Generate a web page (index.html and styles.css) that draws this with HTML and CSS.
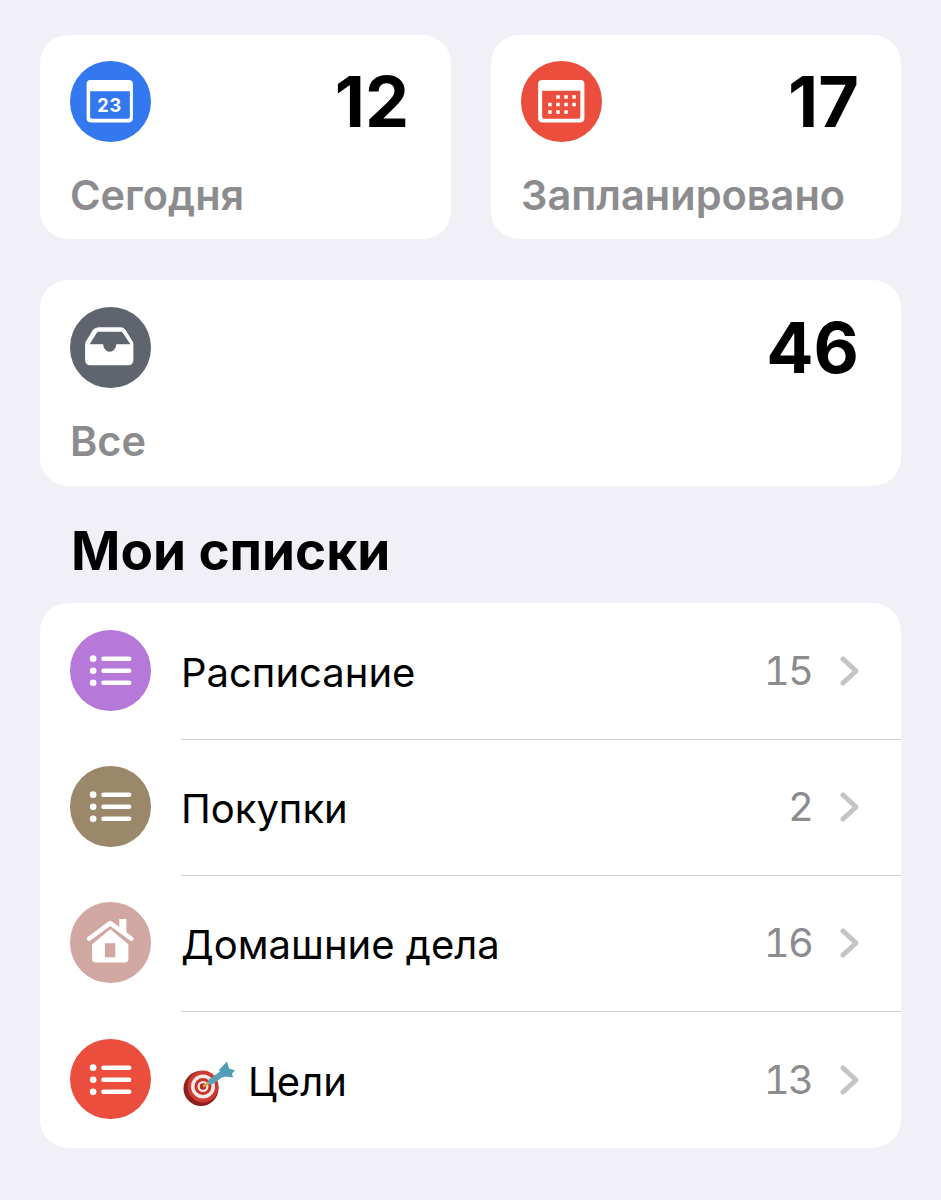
FILE: index.html
```html
<!DOCTYPE html>
<html lang="ru">
<head>
<meta charset="utf-8">
<title>Напоминания</title>
<link rel="stylesheet" href="styles.css">
</head>
<body>
<main class="page">
  <section class="stats">
    <div class="card">
      <div class="card-top">
        <span class="circle blue">
          <svg class="ic" viewBox="0 0 80 80"><path fill="#fff" fill-rule="evenodd" d="M20.500 19h38a4 4 0 0 1 4 4v34a4 4 0 0 1-4 4h-38a4 4 0 0 1-4-4V23a4 4 0 0 1 4-4zm-.5 11v25.500a2 2 0 0 0 2 2h35.500a2 2 0 0 0 2-2V30z"/><text class="date" x="39.500" y="51" text-anchor="middle">23</text></svg>
        </span>
        <span class="count">12</span>
      </div>
      <div class="label">Сегодня</div>
    </div>
    <div class="card">
      <div class="card-top">
        <span class="circle red">
          <svg class="ic" viewBox="0 0 80 80"><path fill="#fff" fill-rule="evenodd" d="M21 19h38a4 4 0 0 1 4 4v34a4 4 0 0 1-4 4H21a4 4 0 0 1-4-4V23a4 4 0 0 1 4-4zm0 10.500v26a2 2 0 0 0 2 2h34a2 2 0 0 0 2-2v-26z"/><g fill="#fff"><rect x="35" y="34" width="3.500" height="3.500"/><rect x="43" y="34" width="3.500" height="3.500"/><rect x="51" y="34" width="3.500" height="3.500"/><rect x="27" y="41.500" width="3.500" height="3.500"/><rect x="35" y="41.500" width="3.500" height="3.500"/><rect x="43" y="41.500" width="3.500" height="3.500"/><rect x="51" y="41.500" width="3.500" height="3.500"/><rect x="27" y="49" width="3.500" height="3.500"/><rect x="35" y="49" width="3.500" height="3.500"/><rect x="43" y="49" width="3.500" height="3.500"/></g></svg>
        </span>
        <span class="count">17</span>
      </div>
      <div class="label">Запланировано</div>
    </div>
    <div class="card wide">
      <div class="card-top">
        <span class="circle slate">
          <svg class="ic" viewBox="0 0 80 80"><path fill="#fff" fill-rule="evenodd" d="M29 20h21c2.500 0 4 1 5.500 3L62 34c.7 1 1 2 1 3.500V53a5 5 0 0 1-5 5H20a5 5 0 0 1-5-5V37.500c0-1.500.3-2.500 1-3.500l6.500-11c1.500-2 4-3 6.500-3zm0 4.500c-1 0-1.800.4-2.500 1.300L19.500 37H33a6.500 7.500 0 0 0 13 0h14l-7.500-11.200c-.7-.9-1.500-1.300-2.500-1.300z"/></svg>
        </span>
        <span class="count">46</span>
      </div>
      <div class="label">Все</div>
    </div>
  </section>

  <h2 class="heading">Мои списки</h2>

  <section class="list">
    <div class="row">
      <span class="circle purple">
        <svg class="ic" viewBox="0 0 80 80"><use href="#bullets"/></svg>
      </span>
      <div class="row-body">
        <span class="name">Расписание</span>
        <span class="num">15</span>
        <svg class="chev" viewBox="0 0 20 30"><path d="M3 3l13 12L3 27"/></svg>
      </div>
    </div>
    <div class="row">
      <span class="circle taupe">
        <svg class="ic" viewBox="0 0 80 80"><use href="#bullets"/></svg>
      </span>
      <div class="row-body">
        <span class="name">Покупки</span>
        <span class="num">2</span>
        <svg class="chev" viewBox="0 0 20 30"><path d="M3 3l13 12L3 27"/></svg>
      </div>
    </div>
    <div class="row">
      <span class="circle rose">
        <svg class="ic" viewBox="0 0 80 80"><path fill="#fff" fill-rule="evenodd" d="M22 42L40 27l18 15v15a3 3 0 0 1-3 3H25a3 3 0 0 1-3-3zM34.700 41v14H45V41z"/><path fill="none" stroke="#fff" stroke-width="4.500" stroke-linecap="round" stroke-linejoin="round" d="M19 36.500L40 21 61 36.500"/><path fill="#fff" d="M49 17h7v14l-7-6z"/></svg>
      </span>
      <div class="row-body">
        <span class="name">Домашние дела</span>
        <span class="num">16</span>
        <svg class="chev" viewBox="0 0 20 30"><path d="M3 3l13 12L3 27"/></svg>
      </div>
    </div>
    <div class="row">
      <span class="circle red">
        <svg class="ic" viewBox="0 0 80 80"><use href="#bullets"/></svg>
      </span>
      <div class="row-body">
        <span class="name goal">
          <svg class="dart" viewBox="0 0 54 48">
            <ellipse cx="20" cy="27.500" rx="17.500" ry="17.500" fill="#8e1f1c"/>
            <ellipse cx="22" cy="25.500" rx="15.500" ry="16" fill="#cf3a32"/>
            <circle cx="22" cy="25.500" r="12" fill="#f3ebe6"/>
            <circle cx="22" cy="25.500" r="8.500" fill="#c9332c"/>
            <circle cx="22" cy="25.500" r="5.500" fill="#efe6e0"/>
            <circle cx="22" cy="25.500" r="3.200" fill="#b92a26"/>
            <path d="M23 25L30 20" stroke="#d8a24a" stroke-width="2.500" stroke-linecap="round"/>
            <path d="M30 20.500L43 11.500" stroke="#5b9fb4" stroke-width="6" stroke-linecap="round"/>
            <path fill="#4f9db6" d="M38 9L46 0.500l2 7 6 2-3 3 1 4-8-1-2 1z"/>
          </svg>
          <span>Цели</span>
        </span>
        <span class="num">13</span>
        <svg class="chev" viewBox="0 0 20 30"><path d="M3 3l13 12L3 27"/></svg>
      </div>
    </div>
  </section>
</main>
<svg class="defs" aria-hidden="true">
  <defs>
    <g id="bullets" fill="#fff">
      <circle cx="23" cy="28.500" r="3.300"/>
      <circle cx="23" cy="40.500" r="3.300"/>
      <circle cx="23" cy="52.500" r="3.300"/>
      <rect x="31" y="26.300" width="30" height="4.400" rx="2.200"/>
      <rect x="31" y="38.300" width="30" height="4.400" rx="2.200"/>
      <rect x="31" y="50.300" width="30" height="4.400" rx="2.200"/>
    </g>
  </defs>
</svg>
</body>
</html>
```
FILE: styles.css
```css
* { box-sizing: border-box; }
html, body { margin: 0; padding: 0; }
body {
  background: #f0f0f6;
  font-family: Inter, "Liberation Sans", sans-serif;
  color: #000;
  height: 1200px;
  overflow: hidden;
}
.page { padding: 35px 40px 0; }
.stats {
  display: grid;
  grid-template-columns: 411px 410px;
  column-gap: 40px;
  row-gap: 41px;
}
.card {
  background: #fff;
  border-radius: 28px;
  height: 204px;
  padding: 26px 42px 0 30px;
}
.card.wide { grid-column: 1 / 3; height: 206px; padding-top: 27px; }
.card-top {
  display: flex;
  justify-content: space-between;
  align-items: flex-start;
  height: 80px;
}
.circle {
  flex: none;
  width: 80.500px;
  height: 80.500px;
  border-radius: 50%;
  display: block;
}
.ic { display: block; width: 100%; height: 100%; }
.blue { background: #3478f0; }
.red { background: #eb4e3d; }
.slate { background: #5f646e; }
.purple { background: #b678d9; }
.taupe { background: #9b8769; }
.rose { background: #d1a7a1; }
.date { font: 700 18px Inter, sans-serif; letter-spacing: 1px; fill: #fff; }
.count {
  font-size: 70px;
  font-weight: 700;
  line-height: 82px;
}
.label {
  margin-top: 31px;
  font-size: 41.500px;
  line-height: 46px;
  font-weight: 600;
  color: #8c8c8f;
}
.heading {
  margin: 34px 0 0 31px;
  font-size: 53px;
  line-height: 62px;
  font-weight: 700;
  height: 83px;
}
.list {
  background: #fff;
  border-radius: 28px;
  height: 545px;
  padding: 27px 0 0 30px;
}
.row {
  display: flex;
  gap: 30.500px;
  height: 136.200px;
}
.row-body {
  flex: 1;
  display: flex;
  align-items: flex-start;
  height: 110px;
  border-bottom: 1px solid #d2d2d6;
  padding-right: 41px;
}
.row:last-child .row-body { border-bottom: 0; }
.name {
  flex: 1;
  font-size: 40px;
  line-height: 85px;
  font-weight: 400;
}
.goal { display: flex; align-items: center; gap: 13px; }
.dart { width: 54px; height: 48px; flex: none; margin-top: 8px; }
.num {
  font-size: 40px;
  line-height: 82px;
  color: #8c8c8f;
  margin-right: 27.500px;
  letter-spacing: -1.500px;
  font-variant-numeric: tabular-nums;
}
.chev { width: 20px; height: 30px; margin-top: 26px; flex: none; }
.chev path {
  fill: none;
  stroke: #c4c4c7;
  stroke-width: 5;
  stroke-linecap: round;
  stroke-linejoin: round;
}
.defs { width: 0; height: 0; display: block; }
```
